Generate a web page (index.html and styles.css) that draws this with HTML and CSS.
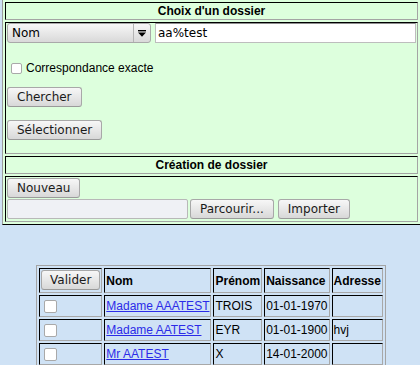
FILE: index.html
```html
<!DOCTYPE html>
<html lang="fr">
<head>
    <meta charset="UTF-8">
    <title>Dossiers</title>
    <link rel="stylesheet" href="styles.css">
</head>
<body>
    <table class="cadre">
        <tr><th>Choix d'un dossier</th></tr>
        <tr>
            <td class="zone">
                <div class="recherche">
                    <div class="ligne">
                        <span class="liste">
                            <select class="choix"><option>Nom</option><option>Prénom</option></select>
                            <span class="fleche">
                                <svg width="8" height="7" viewBox="0 0 8 7"><rect x="0" y="0" width="8" height="1.4"/><path d="M0 2.6h8L4 6.8z"/></svg>
                            </span>
                        </span>
                        <input type="text" class="saisie" value="aa%test">
                    </div>
                    <label class="option"><input type="checkbox" class="case"> Correspondance exacte</label>
                    <button class="bouton chercher">Chercher</button>
                    <button class="bouton selectionner">Sélectionner</button>
                </div>
            </td>
        </tr>
        <tr><th>Création de dossier</th></tr>
        <tr>
            <td class="zone creation">
                <button class="bouton">Nouveau</button>
                <div class="fichier">
                    <span class="champ"></span>
                    <button class="bouton">Parcourir...</button>
                    <button class="bouton importer">Importer</button>
                </div>
            </td>
        </tr>
    </table>

    <table class="dossiers">
        <tr>
            <th class="entete-case"><button class="bouton">Valider</button></th>
            <th>Nom</th>
            <th>Prénom</th>
            <th>Naissance</th>
            <th>Adresse</th>
        </tr>
        <tr>
            <td><input type="checkbox" class="case"></td>
            <td><a href="#">Madame AAATEST</a></td>
            <td>TROIS</td>
            <td>01-01-1970</td>
            <td></td>
        </tr>
        <tr>
            <td><input type="checkbox" class="case"></td>
            <td><a href="#">Madame AATEST</a></td>
            <td>EYR</td>
            <td>01-01-1900</td>
            <td>hvj</td>
        </tr>
        <tr>
            <td><input type="checkbox" class="case"></td>
            <td><a href="#">Mr AATEST</a></td>
            <td>X</td>
            <td>14-01-2000</td>
            <td></td>
        </tr>
    </table>
</body>
</html>
```
FILE: styles.css
```css
body {
    margin: 0 0 0 2px;
    background: #cfe2f5;
    font-family: "Liberation Sans", Arial, sans-serif;
    font-size: 12px;
    color: #000;
}

/* tableau du haut */
.cadre {
    width: 100%;
    background: #ddffdd;
    border-collapse: separate;
    border-spacing: 2px;
    border: 0;
    border-left: 1px solid #9c9c9c;
    border-bottom: 1px solid #000;
}
.cadre th, .cadre td {
    border: 1px solid;
    border-color: #000 #a4a4a4 #a4a4a4 #000;
}
.cadre th {
    padding: 1px;
    line-height: 14px;
    font-size: 12px;
}
.zone {
    padding: 0 1px;
    vertical-align: top;
}
.creation {
    padding: 1px 1px 2px;
}

.recherche {
    display: flex;
    flex-direction: column;
    align-items: flex-start;
}
.ligne {
    display: flex;
    gap: 4px;
    width: 100%;
}

.liste {
    display: inline-flex;
    flex: none;
    width: 144px;
    height: 20px;
    box-sizing: border-box;
    border: 1px solid #a9a9a9;
    border-radius: 3px;
    background: linear-gradient(#f7f7f7, #d9d9d9);
}
.choix {
    -webkit-appearance: none;
    appearance: none;
    width: 125px;
    height: 18px;
    border: 0;
    padding: 0 0 0 4px;
    background: transparent;
    font: 12px "DejaVu Sans", sans-serif;
    color: #000;
}
.fleche {
    width: 17px;
    box-sizing: border-box;
    border-left: 1px solid #b4b4b4;
    display: flex;
    align-items: center;
    justify-content: center;
}
.saisie {
    flex: 1;
    min-width: 0;
    height: 20px;
    box-sizing: border-box;
    border: 1px solid #bdbdbd;
    border-top-color: #8e8e8e;
    padding: 0 2px;
    background: #fff;
    font: 12px "DejaVu Sans", sans-serif;
    color: #000;
}

.option {
    display: flex;
    align-items: center;
    height: 18px;
    margin-top: 16px;
}
.case {
    -webkit-appearance: none;
    appearance: none;
    width: 11px;
    height: 11px;
    margin: 0 4px 0 4px;
    border: 1px solid #a9a9a9;
    border-radius: 2px;
    background: #fff;
}

.bouton {
    height: 20px;
    box-sizing: border-box;
    padding: 0 9px;
    border: 1px solid #a8a8a8;
    border-bottom-color: #9a9a9a;
    border-radius: 3px;
    background: linear-gradient(#f7f7f7, #d8d8d8);
    font: 12px "DejaVu Sans", sans-serif;
    color: #1a1a1a;
}
.chercher {
    margin-top: 10px;
}
.selectionner {
    margin-top: 13px;
    margin-bottom: 13px;
}

.fichier {
    display: flex;
    margin-top: 1px;
}
.champ {
    width: 181px;
    height: 20px;
    box-sizing: border-box;
    border: 1px solid #b8b8b8;
    border-radius: 2px;
    background: #eff1f5;
    margin-right: 2px;
}
.importer {
    margin-left: 4px;
}

/* liste des dossiers */
.dossiers {
    margin: 40px auto 0;
    border-collapse: separate;
    border-spacing: 2px;
    border: 1px solid #a4a4a4;
}
.dossiers th, .dossiers td {
    border: 1px solid;
    border-color: #000 #a8a8a8 #a8a8a8 #000;
    padding: 1px;
    text-align: left;
    line-height: 14px;
    font-size: 12px;
}
.dossiers .entete-case {
    padding: 1px 1px 2px;
}
.dossiers .entete-case .bouton {
    padding: 0 8px;
}
.dossiers td .case {
    width: 13px;
    height: 13px;
    margin: 3px 3px 2px 3px;
    display: block;
}
.dossiers a {
    color: #2b2be8;
}
```
